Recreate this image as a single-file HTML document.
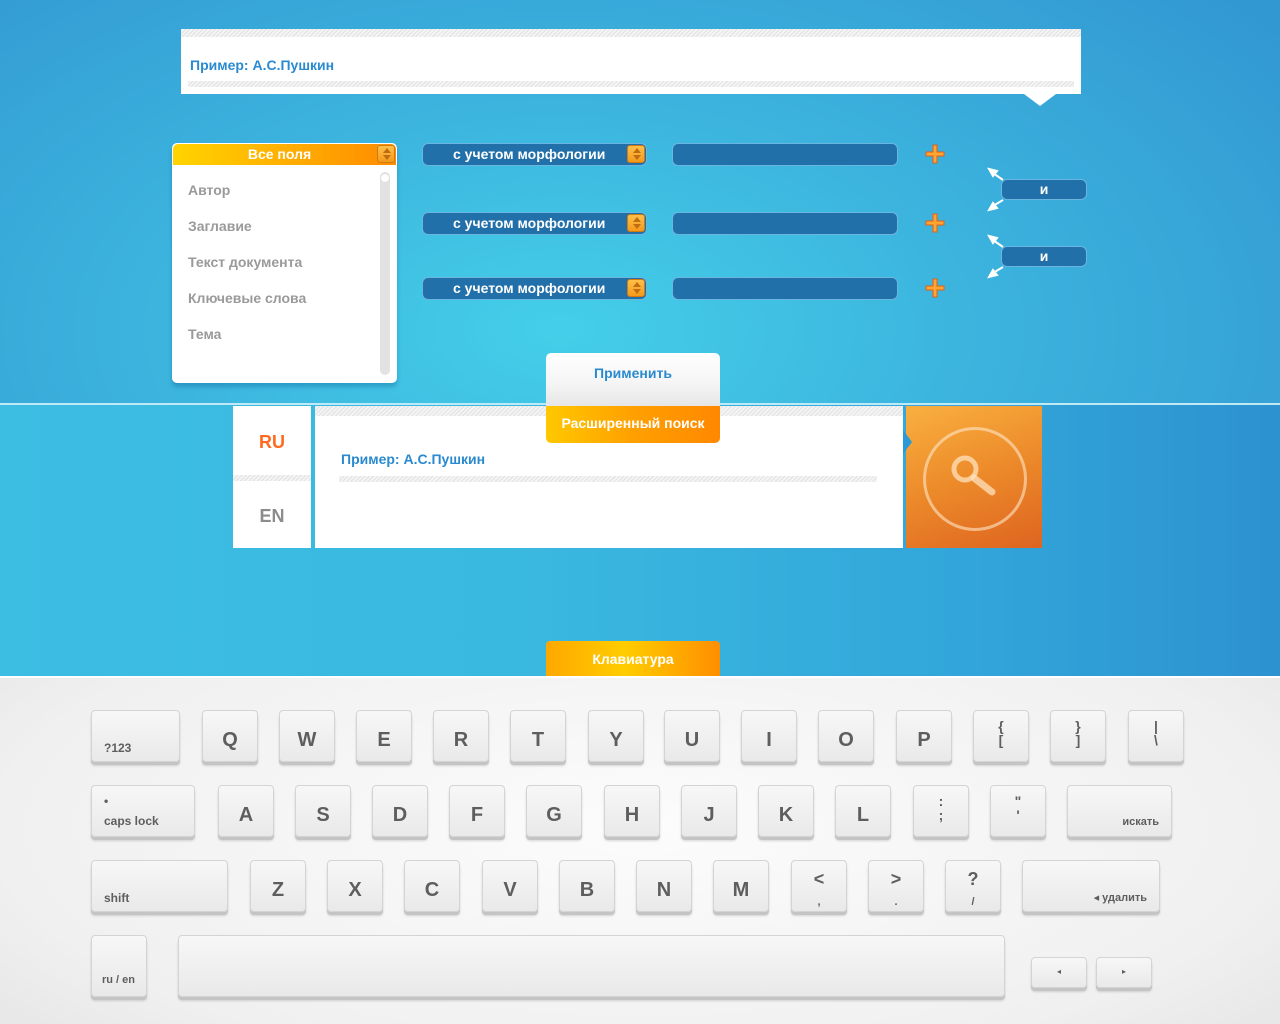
<!DOCTYPE html>
<html><head><meta charset="utf-8"><style>
*{margin:0;padding:0;box-sizing:border-box}
body{width:1280px;height:1024px;overflow:hidden;position:relative;font-family:"Liberation Sans","DejaVu Sans",sans-serif;font-weight:bold}
.a{position:absolute}
#top{left:0;top:0;width:1280px;height:404px;background:radial-gradient(ellipse 900px 500px at 560px 330px,#44cfe9 0%,#3cb4de 45%,#3298d2 100%)}
#mid{left:0;top:405px;width:1280px;height:271px;background:linear-gradient(90deg,#3cbde2 0%,#3ab9e0 40%,#32a6da 75%,#2d92d0 100%)}
#line{left:0;top:403px;width:1280px;height:2px;background:#bfe9f5}
#kb{left:0;top:676px;width:1280px;height:348px;background:radial-gradient(ellipse 800px 300px at 640px 150px,#fcfcfc,#f0f0f0 80%,#e8e8e8);border-top:2px solid #fff}
.hatch{background:repeating-linear-gradient(135deg,#e2e2e2 0 1px,#f4f4f4 1px 3px)}
.sel{border-radius:6px;background:#2270a9;border:1px solid #6bb6e0;color:#fff;font-size:14px}
.arr{width:18px;height:18px;border-radius:3px;background:linear-gradient(#ffc04a,#f29a1c);border:1px solid #d07a10}
.arr:before{content:"";position:absolute;left:5px;top:2px;border:4px solid transparent;border-bottom:5px solid #c06d12;border-top:0}
.arr:after{content:"";position:absolute;left:5px;bottom:2px;border:4px solid transparent;border-top:5px solid #c06d12;border-bottom:0}
.li{color:#9a9a9a;font-size:14px;left:188px}
.k{position:absolute;border-radius:4px;background:linear-gradient(#f7f7f7,#e9e9e9);border:1px solid #d4d4d4;box-shadow:0 3px 0 #c4c4c4,0 4px 2px rgba(0,0,0,.15);color:#5e5e5e;font-size:20px;text-align:center;height:52px;line-height:58px;width:56px}
.k.s{font-size:12px;text-align:left;line-height:normal}
.k.d{font-size:14px;line-height:14px;padding-top:8px}
</style></head><body>
<div class="a" id="top"></div>
<div class="a" id="mid"></div>
<div class="a" id="line"></div>

<div class="a" style="left:181px;top:29px;width:900px;height:65px;background:#fff"></div>
<div class="a hatch" style="left:181px;top:29px;width:900px;height:8px"></div>
<div class="a" style="left:190px;top:57px;color:#2a8ad0;font-size:14px">Пример: А.С.Пушкин</div>
<div class="a hatch" style="left:188px;top:81px;width:886px;height:6px"></div>
<div class="a" style="left:1024px;top:94px;border:16px solid transparent;border-top:12px solid #fff;border-bottom:0"></div>

<div class="a" style="left:172px;top:143px;width:225px;height:240px;background:#fff;border-radius:5px;box-shadow:0 4px 4px rgba(0,80,140,.3)"></div>
<div class="a" style="left:173px;top:144px;width:223px;height:21px;border-radius:5px 5px 0 0;background:linear-gradient(90deg,#ffd400,#ffa800 60%,#ff8c00);color:#fff;font-size:14px;text-align:center;line-height:21px;padding-right:10px">Все поля</div>
<div class="a arr" style="left:377px;top:145px"></div>
<div class="a" style="left:380px;top:172px;width:10px;height:203px;border-radius:5px;background:#e2e2e2"></div>
<div class="a" style="left:380px;top:173px;width:10px;height:10px;border-radius:5px;background:#fff;border:1px solid #ddd"></div>
<div class="a li" style="top:182px">Автор</div>
<div class="a li" style="top:218px">Заглавие</div>
<div class="a li" style="top:254px">Текст документа</div>
<div class="a li" style="top:290px">Ключевые слова</div>
<div class="a li" style="top:326px">Тема</div>

<div class="a sel" style="left:422px;top:143px;width:225px;height:23px;line-height:21px;padding-left:30px">с учетом морфологии</div>
<div class="a arr" style="left:627px;top:145px"></div>
<div class="a sel" style="left:672px;top:143px;width:226px;height:23px"></div>
<div class="a sel" style="left:422px;top:212px;width:225px;height:23px;line-height:21px;padding-left:30px">с учетом морфологии</div>
<div class="a arr" style="left:627px;top:214px"></div>
<div class="a sel" style="left:672px;top:212px;width:226px;height:23px"></div>
<div class="a sel" style="left:422px;top:277px;width:225px;height:23px;line-height:21px;padding-left:30px">с учетом морфологии</div>
<div class="a arr" style="left:627px;top:279px"></div>
<div class="a sel" style="left:672px;top:277px;width:226px;height:23px"></div>
<svg class="a" style="left:925px;top:144px" width="21" height="155" viewBox="0 0 21 155" fill="#ffa531" stroke="#e0601a" stroke-width="1">
<path d="M8 1h4v7h7v4h-7v7h-4v-7h-7v-4h7z"/>
<path d="M8 70h4v7h7v4h-7v7h-4v-7h-7v-4h7z"/>
<path d="M8 135h4v7h7v4h-7v7h-4v-7h-7v-4h7z"/>
</svg>

<div class="a sel" style="left:1001px;top:179px;width:86px;height:21px;text-align:center;line-height:19px">и</div>
<div class="a sel" style="left:1001px;top:246px;width:86px;height:21px;text-align:center;line-height:19px">и</div>
<svg class="a" style="left:985px;top:165px" width="30" height="115" viewBox="0 0 30 115" fill="#fff" stroke="#fff" stroke-width="2">
<line x1="18" y1="15" x2="8" y2="8"/><polygon points="4,4 12,6 8,11"/>
<line x1="18" y1="35" x2="8" y2="41"/><polygon points="4,45 8,38 12,43"/>
<line x1="18" y1="82" x2="8" y2="75"/><polygon points="4,71 12,73 8,78"/>
<line x1="18" y1="102" x2="8" y2="108"/><polygon points="4,112 8,105 12,110"/>
</svg>

<div class="a" style="left:546px;top:353px;width:174px;height:53px;border-radius:5px 5px 0 0;background:linear-gradient(#fff,#f4f4f4 60%,#e6e6e6);color:#2a8ad0;font-size:14px;text-align:center;padding-top:12px">Применить</div>

<div class="a" style="left:233px;top:406px;width:78px;height:142px;background:#fff"></div>
<div class="a hatch" style="left:233px;top:475px;width:78px;height:6px"></div>
<div class="a" style="left:233px;top:432px;width:78px;text-align:center;color:#ff6a1e;font-size:18px">RU</div>
<div class="a" style="left:233px;top:506px;width:78px;text-align:center;color:#8c8c8c;font-size:18px">EN</div>
<div class="a" style="left:315px;top:406px;width:588px;height:142px;background:#fff"></div>
<div class="a hatch" style="left:315px;top:406px;width:588px;height:10px"></div>
<div class="a" style="left:341px;top:451px;color:#2a8ad0;font-size:14px">Пример: А.С.Пушкин</div>
<div class="a hatch" style="left:339px;top:476px;width:538px;height:6px"></div>
<div class="a" style="left:546px;top:406px;width:174px;height:37px;border-radius:0 0 5px 5px;background:linear-gradient(90deg,#ffc800,#ffa000 50%,#ff8800);color:#fff;font-size:14px;text-align:center;line-height:34px">Расширенный поиск</div>
<div class="a" style="left:906px;top:406px;width:136px;height:142px;background:linear-gradient(160deg,#f9b040,#ec8a2a 50%,#de6420)"></div>
<div class="a" style="left:903px;top:430px;border:12px solid transparent;border-left:9px solid #2a9ad6;border-right:0"></div>
<div class="a" style="left:923px;top:427px;width:104px;height:104px;border-radius:50%;border:3px solid rgba(255,230,200,.6)"></div>
<svg class="a" style="left:948px;top:452px" width="54" height="54" viewBox="0 0 54 54"><circle cx="17" cy="17" r="11" fill="none" stroke="rgba(255,225,190,.75)" stroke-width="5"/><line x1="26" y1="26" x2="44" y2="40" stroke="rgba(255,225,190,.75)" stroke-width="7" stroke-linecap="round"/></svg>

<div class="a" style="left:546px;top:641px;width:174px;height:36px;border-radius:4px 4px 0 0;background:linear-gradient(90deg,#ffa800,#ffcd00 45%,#ff8e00);color:#fff;font-size:14px;text-align:center;line-height:36px">Клавиатура</div>
<div class="a" id="kb"></div>

<div class="k s" style="left:91px;top:710px;width:89px;padding:30px 0 0 12px">?123</div>
<div class="k" style="left:202px;top:710px">Q</div>
<div class="k" style="left:279px;top:710px">W</div>
<div class="k" style="left:356px;top:710px">E</div>
<div class="k" style="left:433px;top:710px">R</div>
<div class="k" style="left:510px;top:710px">T</div>
<div class="k" style="left:588px;top:710px">Y</div>
<div class="k" style="left:664px;top:710px">U</div>
<div class="k" style="left:741px;top:710px">I</div>
<div class="k" style="left:818px;top:710px">O</div>
<div class="k" style="left:896px;top:710px">P</div>
<div class="k d" style="left:973px;top:710px">{<br>[</div>
<div class="k d" style="left:1050px;top:710px">}<br>]</div>
<div class="k d" style="left:1128px;top:710px">|<br>\</div>
<div class="k s" style="left:91px;top:785px;width:104px;padding:8px 0 0 12px">•<br><span style="line-height:26px">caps lock</span></div>
<div class="k" style="left:218px;top:785px">A</div>
<div class="k" style="left:295px;top:785px">S</div>
<div class="k" style="left:372px;top:785px">D</div>
<div class="k" style="left:449px;top:785px">F</div>
<div class="k" style="left:526px;top:785px">G</div>
<div class="k" style="left:604px;top:785px">H</div>
<div class="k" style="left:681px;top:785px">J</div>
<div class="k" style="left:758px;top:785px">K</div>
<div class="k" style="left:835px;top:785px">L</div>
<div class="k d" style="left:913px;top:785px">:<br>;</div>
<div class="k d" style="left:990px;top:785px">"<br>'</div>
<div class="k s" style="left:1067px;top:785px;width:105px;text-align:right;padding:30px 12px 0 0;font-size:11px">искать</div>
<div class="k s" style="left:91px;top:860px;width:137px;padding:30px 0 0 12px">shift</div>
<div class="k" style="left:250px;top:860px">Z</div>
<div class="k" style="left:327px;top:860px">X</div>
<div class="k" style="left:404px;top:860px">C</div>
<div class="k" style="left:482px;top:860px">V</div>
<div class="k" style="left:559px;top:860px">B</div>
<div class="k" style="left:636px;top:860px">N</div>
<div class="k" style="left:713px;top:860px">M</div>
<div class="k d" style="left:791px;top:860px;font-size:18px;line-height:20px">&lt;<br><span style="font-size:11px">,</span></div>
<div class="k d" style="left:868px;top:860px;font-size:18px;line-height:20px">&gt;<br><span style="font-size:11px">.</span></div>
<div class="k d" style="left:945px;top:860px;font-size:18px;line-height:20px">?<br><span style="font-size:11px">/</span></div>
<div class="k s" style="left:1022px;top:860px;width:138px;text-align:right;padding:30px 12px 0 0;font-size:11px">◂ удалить</div>
<div class="k s" style="left:91px;top:935px;height:62px;padding:38px 0 0 10px;font-size:11px">ru / en</div>
<div class="k" style="left:178px;top:935px;width:827px;height:62px"></div>
<div class="k" style="left:1031px;top:957px;height:31px;line-height:28px;font-size:8px">◂</div>
<div class="k" style="left:1096px;top:957px;height:31px;line-height:28px;font-size:8px">▸</div>
</body></html>
